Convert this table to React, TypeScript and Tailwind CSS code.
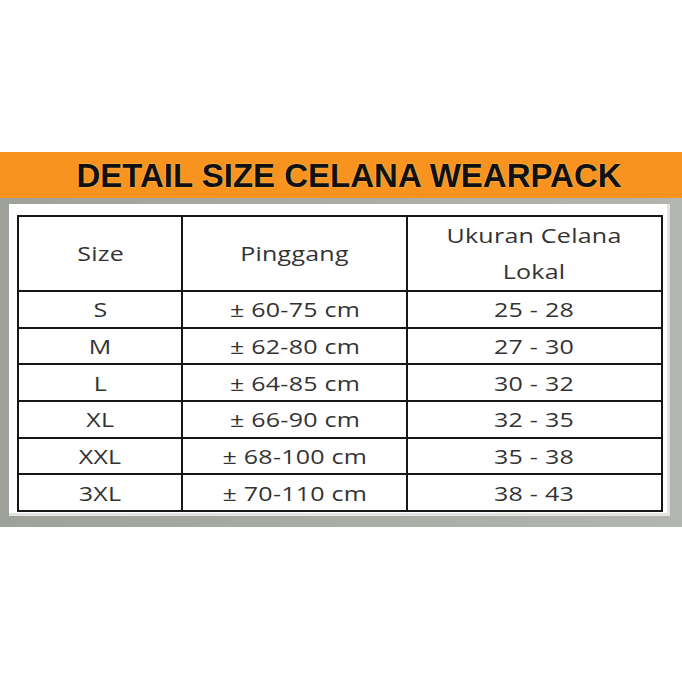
const rows = [
  { size: "S", waist: "± 60-75 cm", local: "25 - 28" },
  { size: "M", waist: "± 62-80 cm", local: "27 - 30" },
  { size: "L", waist: "± 64-85 cm", local: "30 - 32" },
  { size: "XL", waist: "± 66-90 cm", local: "32 - 35" },
  { size: "XXL", waist: "± 68-100 cm", local: "35 - 38" },
  { size: "3XL", waist: "± 70-110 cm", local: "38 - 43" },
];

function Wide({ children }: { children: React.ReactNode }) {
  return <span className="inline-block scale-x-[1.25] tracking-[0.2px]">{children}</span>;
}

export default function App() {
  return (
    <div className="w-[682px] h-[682px] bg-white overflow-hidden">
      <div className="h-[152px]" />

      {/* Title bar */}
      <div className="h-[46px] bg-[#f7931e] flex items-center justify-center">
        <h1
          className="text-[33px] font-bold leading-none text-[#111] pl-[16px]"
          style={{
            fontFamily: '"Liberation Sans", Arial, sans-serif',
            textShadow: "0 0 2px #ffc266, 0 0 1px #ffc266",
          }}
        >
          DETAIL SIZE CELANA WEARPACK
        </h1>
      </div>

      {/* Gray panel */}
      <div className="h-[329px] bg-gradient-to-r from-[#9ea29a] via-[#aaada6] to-[#b3b5b0] pt-[6px] pl-[9px] pr-[12px]">
        <div className="h-[312px] bg-white pt-[11px] pl-[8px] pr-[7px] border-r-[3px] border-b-[3px] border-[#e4e5e2]">
          <table
            className="w-[646px] border-collapse border-2 border-[#161616] text-[#333] text-[20px]"
            style={{ fontFamily: '"Open Sans", sans-serif' }}
          >
            <colgroup>
              <col className="w-[165px]" />
              <col className="w-[225px]" />
              <col className="w-[256px]" />
            </colgroup>
            <thead>
              <tr className="h-[75px]">
                <th className="border-2 border-[#161616] font-normal text-center">
                  <Wide>Size</Wide>
                </th>
                <th className="border-2 border-[#161616] font-normal text-center">
                  <Wide>Pinggang</Wide>
                </th>
                <th className="border-2 border-[#161616] font-normal text-center leading-[36px]">
                  <Wide>Ukuran Celana</Wide>
                  <br />
                  <Wide>Lokal</Wide>
                </th>
              </tr>
            </thead>
            <tbody>
              {rows.map((r) => (
                <tr key={r.size} className="h-[36.7px]">
                  <td className="border-2 border-[#161616] text-center leading-none pt-[2px]">
                    <Wide>{r.size}</Wide>
                  </td>
                  <td className="border-2 border-[#161616] text-center leading-none pt-[2px]">
                    <Wide>{r.waist}</Wide>
                  </td>
                  <td className="border-2 border-[#161616] text-center leading-none pt-[2px]">
                    <Wide>{r.local}</Wide>
                  </td>
                </tr>
              ))}
            </tbody>
          </table>
        </div>
      </div>
    </div>
  );
}
